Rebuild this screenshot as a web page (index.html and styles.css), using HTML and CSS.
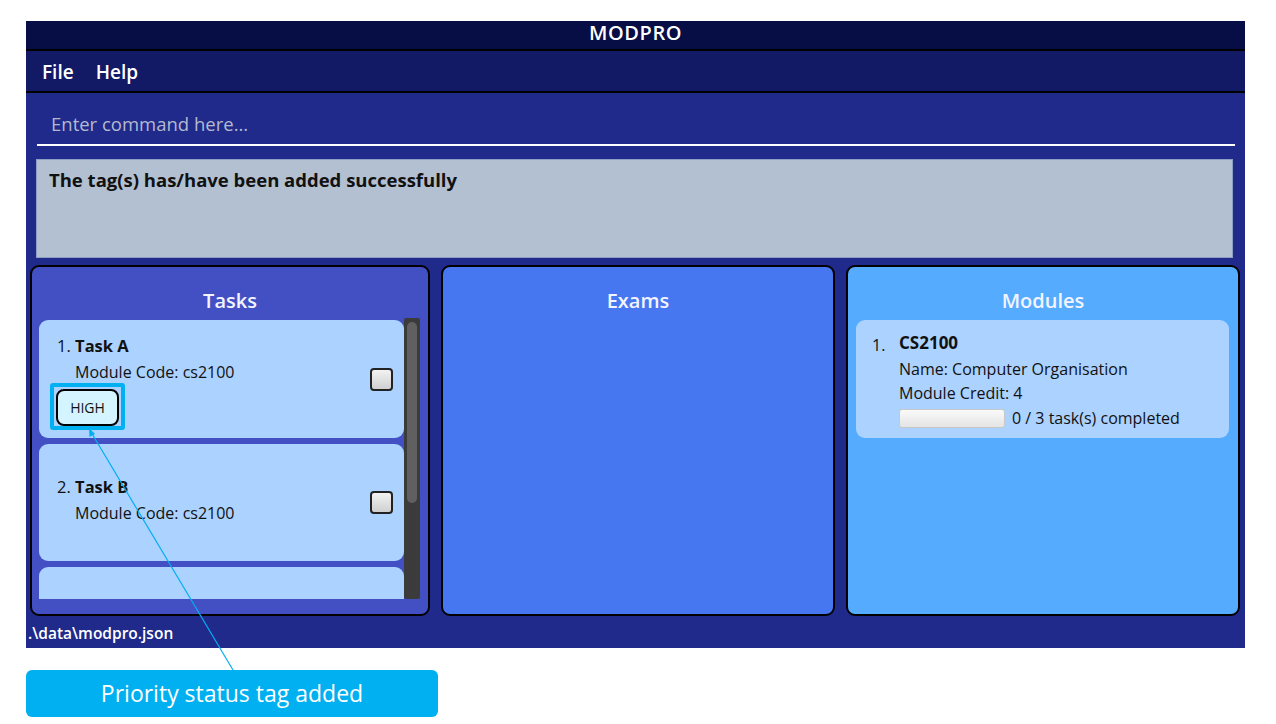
FILE: index.html
```html
<!DOCTYPE html>
<html>
<head>
<meta charset="utf-8">
<link rel="stylesheet" href="styles.css">
</head>
<body>
<div class="page">
  <div class="app">
    <div class="titlebar">MODPRO</div>
    <div class="menubar"><span class="menu-item">File</span><span class="menu-item">Help</span></div>
    <div class="main">
      <div class="command"><span class="placeholder">Enter command here...</span></div>
      <div class="result">The tag(s) has/have been added successfully</div>
      <div class="panels">
        <div class="panel tasks">
          <div class="panel-title">Tasks</div>
          <div class="list-wrap">
            <div class="list">
              <div class="card task first">
                <div class="task-body">
                  <div class="task-title"><span class="idx">1.</span> <b>Task A</b></div>
                  <div class="task-line">Module Code: cs2100</div>
                  <div class="tags"><span class="tag-hl"><span class="tag">HIGH</span></span></div>
                </div>
                <span class="checkbox"></span>
              </div>
              <div class="card task second">
                <div class="task-body">
                  <div class="task-title"><span class="idx">2.</span> <b>Task B</b></div>
                  <div class="task-line">Module Code: cs2100</div>
                </div>
                <span class="checkbox"></span>
              </div>
              <div class="card task partial"></div>
            </div>
            <div class="scrollbar"><div class="thumb"></div></div>
          </div>
        </div>
        <div class="panel exams">
          <div class="panel-title">Exams</div>
        </div>
        <div class="panel modules">
          <div class="panel-title">Modules</div>
          <div class="card module">
            <span class="m-idx">1.</span>
            <div class="m-body">
              <div class="m-code">CS2100</div>
              <div class="m-line">Name: Computer Organisation</div>
              <div class="m-line">Module Credit: 4</div>
              <div class="m-progress"><span class="bar"></span><span>0 / 3 task(s) completed</span></div>
            </div>
          </div>
        </div>
      </div>
      <div class="status">.\data\modpro.json</div>
    </div>
  </div>
  <div class="callout">Priority status tag added</div>
  <svg class="arrow" width="1276" height="724" viewBox="0 0 1276 724">
    <line x1="233" y1="670" x2="91" y2="432" stroke="#00b0f0" stroke-width="1.2"/>
    <polygon points="89,428 89.5,437 95,434" fill="#00b0f0"/>
  </svg>
</div>
</body>
</html>
```
FILE: styles.css
```css
* { box-sizing: border-box; }
html, body { margin: 0; padding: 0; background: #ffffff; }
body { font-family: "Open Sans", "Noto Sans", sans-serif; }
.page { position: relative; width: 1276px; height: 724px; padding: 21px 0 0 26px; }
.app { width: 1219px; height: 627px; display: flex; flex-direction: column; background: #1f2a8a; }
.titlebar { height: 30px; flex: none; background: #070d45; border-bottom: 2px solid #000; color: #fff; font-size: 20px; font-weight: 600; text-align: center; line-height: 24px; letter-spacing: 0.6px; }
.menubar { height: 42px; flex: none; background: #121a66; border-bottom: 2px solid #000; display: flex; align-items: center; padding-left: 16px; gap: 22px; color: #fff; font-size: 19px; font-weight: 600; padding-top: 2px; }
.main { flex: 1; display: flex; flex-direction: column; padding: 0 10px 0 10px; }
.command { height: 53px; flex: none; margin-left: 1px; border-bottom: 2px solid #fff; display: flex; align-items: flex-end; padding: 0 0 8px 14px; }
.placeholder { color: #b5b9cf; font-size: 18.5px; }
.result { margin-top: 13px; height: 99px; flex: none; background: #b3c0d1; border: 1px solid #8e9dc4; padding: 7px 12px; font-weight: 700; font-size: 18.5px; color: #111; margin-right: 2px; }
.panels { margin: 7px -5px 0 -6px; display: flex; gap: 11px; height: 351px; flex: none; }
.panel { border: 2px solid #000; border-radius: 9px; display: flex; flex-direction: column; flex: none; }
.panel-title { color: #f2f4ff; font-size: 20px; font-weight: 600; text-align: center; height: 53px; padding-top: 20px; line-height: 27px; flex: none; }
.tasks { width: 400px; background: #4350c4; }
.exams { width: 394px; background: #4677f0; }
.modules { width: 394px; background: #55acff; }
.list-wrap { display: flex; margin-left: 7px; height: 279px; }
.list { width: 365px; display: flex; flex-direction: column; gap: 6px; overflow: hidden; }
.card { background: #acd2ff; border-radius: 9px; }
.task { height: 118px; flex: none; display: flex; align-items: flex-start; padding: 0 11px 0 18px; }
.task.first { padding-top: 14px; }
.task.second { height: 117px; padding-top: 31px; }
.task.partial { height: 40px; }
.task-body { flex: 1; }
.task-title { font-size: 16.5px; color: #111; line-height: 23px; }
.task-title b { font-weight: 700; }
.task-line { font-size: 16px; color: #111; padding-left: 18px; margin-top: 4px; line-height: 22px; }
.tags { margin-top: 0; margin-left: -7px; }
.tag-hl { display: inline-block; border: 4px solid #00b0f0; border-radius: 3px; padding: 2px 2px 0 2px; line-height: 0; }
.tag { display: inline-block; width: 63px; height: 37px; background: #d4f4ff; border: 2px solid #000; border-radius: 8px; font-size: 14px; color: #111; text-align: center; line-height: 33px; }
.checkbox { width: 23px; height: 23px; border: 2px solid #222; border-radius: 4px; background: linear-gradient(#f2f2f2, #d0d0d0); flex: none; align-self: center; }
.task.first .checkbox { margin-top: -14px; }
.task.second .checkbox { margin-top: -31px; }
.scrollbar { width: 16px; height: 281px; background: #3b3b3b; margin-top: -2px; padding: 4px 3px; border-radius: 2px; }
.thumb { height: 181px; background: #606060; border-radius: 5px; }
.module { margin: 0 9px 0 8px; height: 118px; display: flex; padding: 12px 16px; }
.m-idx { font-size: 16px; color: #111; width: 27px; padding-top: 2px; }
.m-code { font-size: 17px; font-weight: 700; color: #111; line-height: 22px; }
.m-line { font-size: 16px; color: #111; line-height: 24px; margin-top: 3px; }
.m-line + .m-line { margin-top: 0; }
.m-progress { display: flex; align-items: center; gap: 7px; font-size: 16px; color: #111; line-height: 26px; margin-top: 0; }
.bar { width: 106px; height: 19px; background: linear-gradient(#fafafa, #e4e4e4); border: 1px solid #c8c8c8; border-radius: 3px; }
.status { color: #fff; font-size: 15.5px; font-weight: 600; margin-left: -8px; margin-top: 6px; }
.callout { margin-top: 22px; width: 412px; height: 47px; background: #00b0f0; border-radius: 6px; color: #fff; font-size: 23px; text-align: center; line-height: 46px; }
.arrow { position: absolute; left: 0; top: 0; pointer-events: none; }
```
